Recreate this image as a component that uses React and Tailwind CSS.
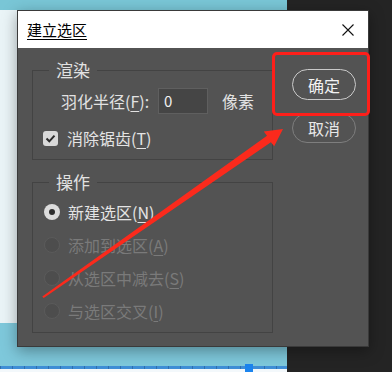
import React from 'react';

const Key = ({ k }) => (
  <span>
    (<span className="underline underline-offset-[3px] decoration-1">{k}</span>)
  </span>
);

const Group = ({ title, className = '', children }) => (
  <div className={`relative border border-[#434343] ${className}`}>
    <span className="absolute -top-[12px] left-[16px] px-[7px] bg-[#535353] text-[17px] leading-[22px] text-[#e2e2e2]">
      {title}
    </span>
    {children}
  </div>
);

const Radio = ({ checked, disabled, label, k }) => (
  <div className="flex items-center h-[33px]">
    {checked ? (
      <span className="w-[16px] h-[16px] rounded-full bg-[#dcdcdc] flex items-center justify-center">
        <span className="w-[6px] h-[6px] rounded-full bg-[#2e2e2e]" />
      </span>
    ) : (
      <span className="w-[16px] h-[16px] rounded-full bg-[#4d4d4d] border border-[#5b5b5b]" />
    )}
    <span className={`ml-[8px] text-[16px] leading-none ${disabled ? 'text-[#7a7a7a]' : 'text-[#e4e4e4]'}`}>
      {label}
      <Key k={k} />
    </span>
  </div>
);

export default function App() {
  return (
    <div
      className="relative w-[392px] h-[372px] overflow-hidden flex"
      style={{ fontFamily: '"Noto Sans CJK SC", "Noto Sans", sans-serif' }}
    >
      {/* desktop background */}
      <div className="w-[287px] flex flex-col">
        <div className="h-[10px] bg-[#79c6d6]" />
        <div className="h-[313px] bg-[#eaf4f7]" />
        <div className="h-[43px] bg-[#7ec8db]" />
        <div className="h-[3px] bg-[#3f8ed6] bg-[repeating-linear-gradient(90deg,#2f6fb0_0,#2f6fb0_1px,transparent_1px,transparent_12px)]" />
        <div className="flex-1 bg-[#f3f8fb]" />
      </div>
      <div className="flex-1 bg-[#242424]" />
      <div className="absolute left-[245px] top-[364px] w-[8px] h-[8px] bg-[#1b84ee]" />

      {/* dialog */}
      <div className="absolute left-[17px] top-[10px] w-[352px] h-[337px] bg-[#535353] border border-[#3a3a3a] shadow-[0_4px_14px_rgba(0,0,0,0.35)] flex flex-col">
        <div className="h-[37px] shrink-0 bg-white flex items-center justify-between pl-[9px] pr-[14px]">
          <span className="text-[15px] leading-none text-black underline underline-offset-[3px] decoration-1">建立选区</span>
          <svg width="12" height="12" viewBox="0 0 12 12">
            <path d="M0.5 0.5 L11.5 11.5 M11.5 0.5 L0.5 11.5" stroke="#111" strokeWidth="1.1" />
          </svg>
        </div>

        <div className="flex pl-[14px]">
          <div className="w-[241px] flex flex-col">
            <Group title="渲染" className="mt-[22px] h-[90px]">
              <div className="flex items-center h-[26px] mt-[17px] pl-[28px] text-[16px] text-[#e2e2e2]">
                <span className="w-[97px] leading-none">
                  羽化半径<Key k="F" />:
                </span>
                <div className="w-[50px] h-[26px] bg-[#454545] border border-[#5f5f5f] flex items-center pl-[5px] text-[15px] text-[#f0f0f0]">
                  0
                </div>
                <span className="ml-[14px] leading-none">像素</span>
              </div>
              <div className="flex items-center mt-[16px] pl-[10px]">
                <span className="w-[15px] h-[15px] rounded-[3px] bg-[#d9d9d9] flex items-center justify-center">
                  <svg width="11" height="11" viewBox="0 0 11 11">
                    <path d="M1.5 5.5 L4.3 8.3 L9.5 2.6" fill="none" stroke="#2b2b2b" strokeWidth="2" />
                  </svg>
                </span>
                <span className="ml-[9px] text-[16px] leading-none text-[#e4e4e4]">
                  消除锯齿<Key k="T" />
                </span>
              </div>
            </Group>

            <Group title="操作" className="mt-[22px] h-[151px]">
              <div className="flex flex-col pt-[12px] pl-[11px]">
                <Radio checked label="新建选区" k="N" />
                <Radio disabled label="添加到选区" k="A" />
                <Radio disabled label="从选区中减去" k="S" />
                <Radio disabled label="与选区交叉" k="I" />
              </div>
            </Group>
          </div>

          <div className="ml-[19px] pt-[21px] flex flex-col">
            <button className="w-[64px] h-[31px] rounded-full border-[1.5px] border-[#cacaca] text-[16px] leading-none text-[#f2f2f2]">
              确定
            </button>
            <button className="mt-[13px] w-[64px] h-[30px] rounded-full border border-[#7e7e7e] text-[16px] leading-none text-[#e8e8e8]">
              取消
            </button>
          </div>
        </div>
      </div>

      {/* annotations */}
      <div className="absolute left-[272px] top-[52px] w-[98px] h-[64px] border-[3px] border-[#fe1f1a] rounded-[5px]" />
      <svg className="absolute inset-0 pointer-events-none" width="392" height="372" viewBox="0 0 392 372">
        <polygon
          points="42.3,296.4 267,135.7 263.8,131.6 283,129 274.2,146.2 270.9,142.2 43.7,298"
          fill="#fb2a1c"
        />
      </svg>
    </div>
  );
}
